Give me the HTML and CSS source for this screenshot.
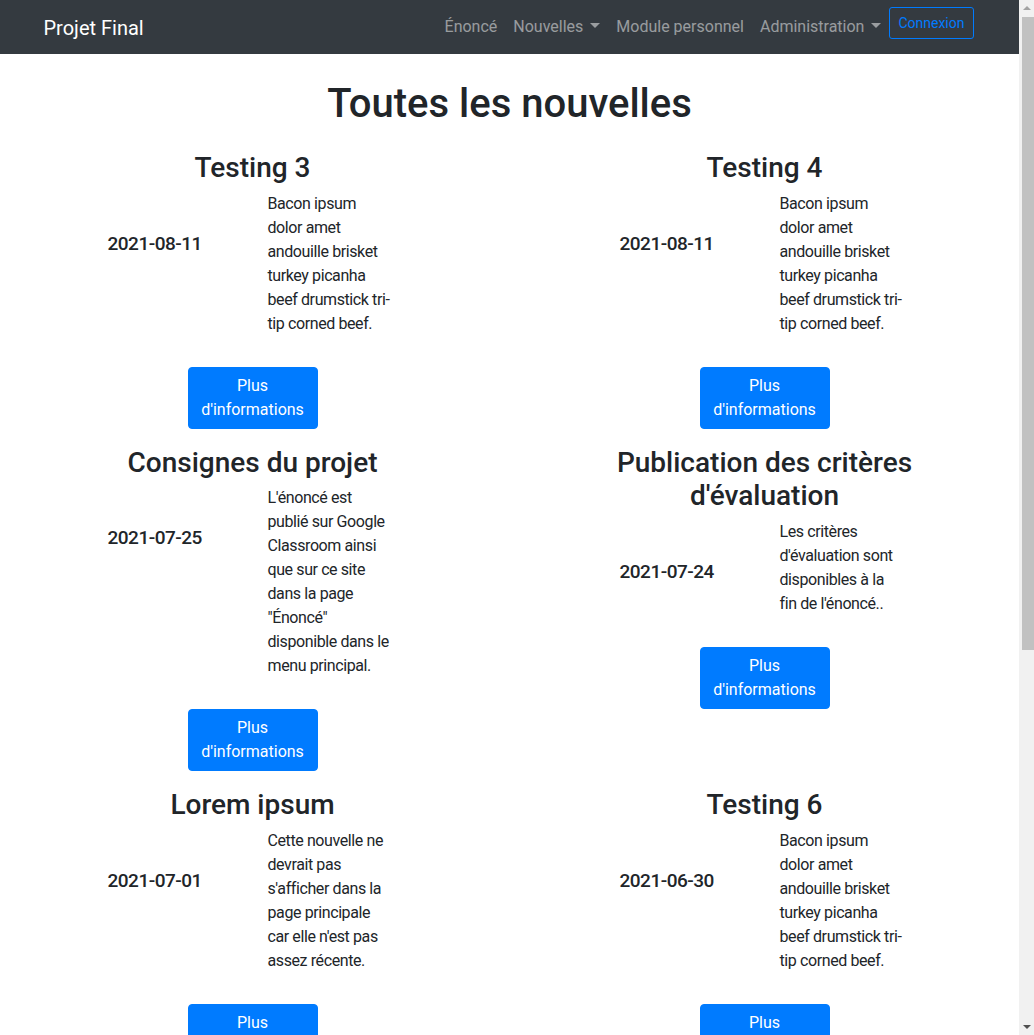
FILE: index.html
```html
<!DOCTYPE html>
<html lang="fr">
<head>
<meta charset="utf-8">
<title>Toutes les nouvelles</title>
<link rel="stylesheet" href="styles.css">
</head>
<body>
<header class="navbar">
  <div class="navbar-inner">
    <a class="brand" href="#">Projet Final</a>
    <nav class="nav">
      <a class="nav-link" href="#">Énoncé</a>
      <a class="nav-link dropdown" href="#">Nouvelles</a>
      <a class="nav-link" href="#">Module personnel</a>
      <a class="nav-link dropdown" href="#">Administration</a>
      <a class="btn-login" href="#">Connexion</a>
    </nav>
  </div>
</header>

<main class="page">
  <h1 class="page-title">Toutes les nouvelles</h1>
  <section class="news-grid">
    <article class="news">
      <h3 class="news-title">Testing 3</h3>
      <div class="news-body">
        <div class="news-date">2021-08-11</div>
        <p class="news-text">Bacon ipsum<br>dolor amet<br>andouille brisket<br>turkey picanha<br>beef drumstick tri-<br>tip corned beef.</p>
      </div>
      <a class="btn-more" href="#">Plus d'informations</a>
    </article>
    <article class="news">
      <h3 class="news-title">Testing 4</h3>
      <div class="news-body">
        <div class="news-date">2021-08-11</div>
        <p class="news-text">Bacon ipsum<br>dolor amet<br>andouille brisket<br>turkey picanha<br>beef drumstick tri-<br>tip corned beef.</p>
      </div>
      <a class="btn-more" href="#">Plus d'informations</a>
    </article>
    <article class="news">
      <h3 class="news-title">Consignes du projet</h3>
      <div class="news-body">
        <div class="news-date">2021-07-25</div>
        <p class="news-text">L'énoncé est<br>publié sur Google<br>Classroom ainsi<br>que sur ce site<br>dans la page<br>"Énoncé"<br>disponible dans le<br>menu principal.</p>
      </div>
      <a class="btn-more" href="#">Plus d'informations</a>
    </article>
    <article class="news">
      <h3 class="news-title">Publication des critères d'évaluation</h3>
      <div class="news-body">
        <div class="news-date">2021-07-24</div>
        <p class="news-text">Les critères<br>d'évaluation sont<br>disponibles à la<br>fin de l'énoncé..</p>
      </div>
      <a class="btn-more" href="#">Plus d'informations</a>
    </article>
    <article class="news">
      <h3 class="news-title">Lorem ipsum</h3>
      <div class="news-body">
        <div class="news-date">2021-07-01</div>
        <p class="news-text">Cette nouvelle ne<br>devrait pas<br>s'afficher dans la<br>page principale<br>car elle n'est pas<br>assez récente.</p>
      </div>
      <a class="btn-more" href="#">Plus d'informations</a>
    </article>
    <article class="news">
      <h3 class="news-title">Testing 6</h3>
      <div class="news-body">
        <div class="news-date">2021-06-30</div>
        <p class="news-text">Bacon ipsum<br>dolor amet<br>andouille brisket<br>turkey picanha<br>beef drumstick tri-<br>tip corned beef.</p>
      </div>
      <a class="btn-more" href="#">Plus d'informations</a>
    </article>
  </section>
</main>

<div class="scrollbar" aria-hidden="true">
  <span class="sb-arrow sb-up"></span>
  <span class="sb-thumb"></span>
  <span class="sb-arrow sb-down"></span>
</div>
</body>
</html>
```
FILE: styles.css
```css
html {
  overflow: hidden;
}
body {
  margin: 0;
  padding-right: 15px;
  font-family: Roboto, "Liberation Sans", sans-serif;
  font-size: 16px;
  line-height: 1.5;
  color: #212529;
  background: #fff;
}
a {
  text-decoration: none;
}

/* navbar */
.navbar {
  background: #343a40;
  height: 54px;
}
.navbar-inner {
  max-width: 930px;
  height: 100%;
  margin: 0 auto;
  padding: 0 15px;
  display: flex;
  align-items: center;
  justify-content: space-between;
}
.brand {
  color: #fff;
  font-size: 20px;
  line-height: 30px;
  margin-top: 1px;
  margin-left: -1px;
}
.nav {
  display: flex;
  align-items: center;
}
.nav-link {
  color: rgba(255, 255, 255, 0.5);
  padding: 0 8px;
  line-height: 24px;
}
.dropdown::after {
  content: "";
  display: inline-block;
  margin-left: 7px;
  vertical-align: 4px;
  border-top: 5px solid;
  border-left: 5px solid transparent;
  border-right: 5px solid transparent;
}
.btn-login {
  color: #007bff;
  border: 1px solid #007bff;
  border-radius: 3px;
  font-size: 14px;
  line-height: 21px;
  padding: 5px 8px 4px;
  margin-bottom: 8px;
  margin-right: 1px;
}

/* page */
.page {
  padding-top: 26px;
}
.page-title {
  margin: 0 0 23px;
  font-size: 40px;
  font-weight: 500;
  line-height: 1.2;
  text-align: center;
}
.news-grid {
  display: grid;
  grid-template-columns: 1fr 1fr;
  column-gap: 7px;
  row-gap: 17px;
  padding-right: 2px;
}
.news {
  display: flex;
  flex-direction: column;
  align-items: center;
}
.news-title {
  margin: 0 0 7px;
  max-width: 440px;
  font-size: 28px;
  font-weight: 500;
  line-height: 1.2;
  text-align: center;
}
.news-body {
  display: grid;
  grid-template-columns: 160px 160px;
}
.news-date {
  padding: 41px 15px 0;
  font-size: 19px;
  font-weight: 500;
  line-height: 1.2;
  letter-spacing: -0.5px;
}
.news-text {
  margin: 0;
  padding: 0 15px;
  white-space: nowrap;
  letter-spacing: -0.4px;
}
.btn-more {
  display: block;
  box-sizing: border-box;
  width: 130px;
  margin-top: 31px;
  padding: 6px 12px;
  border: 1px solid #007bff;
  border-radius: 4px;
  background: #007bff;
  color: #fff;
  text-align: center;
}

/* fake classic scrollbar */
.scrollbar {
  position: fixed;
  top: 0;
  right: 0;
  bottom: 0;
  width: 15px;
  background: #f1f1f1;
  display: flex;
  flex-direction: column;
  align-items: center;
}
.sb-arrow {
  width: 0;
  height: 0;
  border-left: 4px solid transparent;
  border-right: 4px solid transparent;
}
.sb-up {
  border-bottom: 4px solid #a3a3a3;
  margin: 6px 0 7px;
}
.sb-down {
  border-top: 4px solid #505050;
  margin: auto 0 6px;
}
.sb-thumb {
  width: 12px;
  margin-left: 2px;
  height: 633px;
  background: #c1c1c1;
}
```
